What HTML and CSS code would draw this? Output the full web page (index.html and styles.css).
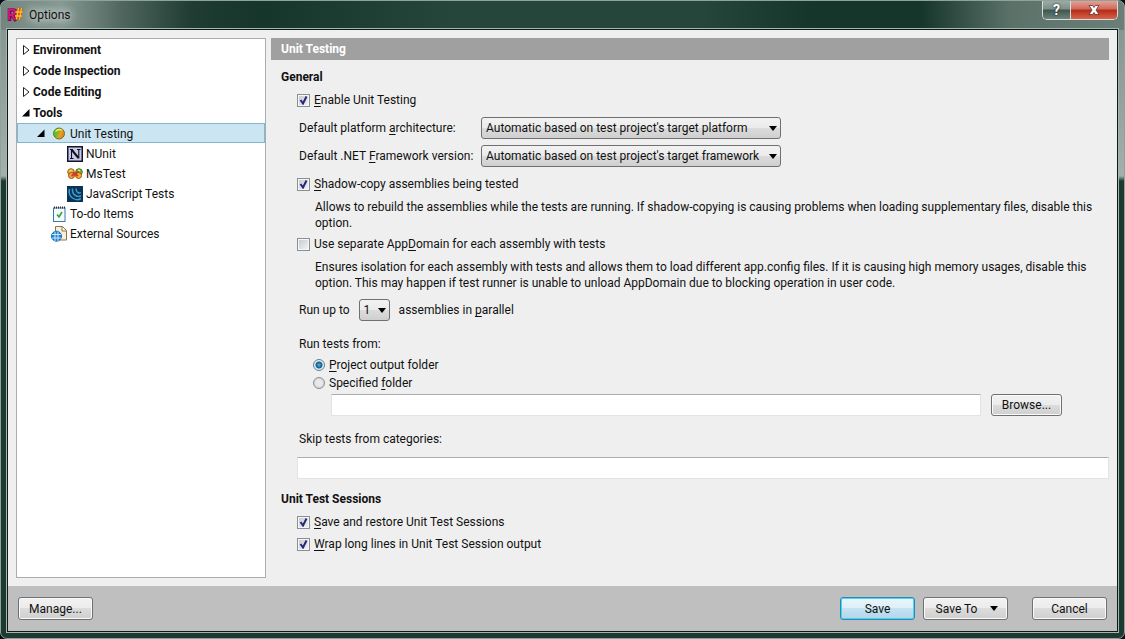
FILE: index.html
```html
<!DOCTYPE html>
<html lang="en">
<head>
    <meta charset="UTF-8">
    <meta name="viewport" content="width=device-width, initial-scale=1.0">
    <title>Options</title>
    <link rel="stylesheet" href="styles.css">
</head>
<body>
    <div class="window">
        <header class="titlebar">
            <svg class="app-icon" width="16" height="16" viewBox="0 0 16 16">
                <path d="M2.500 14V3h3.500q2.500 0 2.500 2.500T6 8.500H3M5.500 8.500L9 14" fill="none" stroke="#7d0a4c" stroke-width="3.600"/>
                <path d="M2 13V2.500h3.500q2.500 0 2.500 2.500T5.500 8H3M5 8l3 5" fill="none" stroke="#d0187f" stroke-width="1.800"/>
                <path d="M11.500 1L9.500 12.500M14.500 1L12.500 12.500M8.500 5h7M8 9h7" fill="none" stroke="#c8501a" stroke-width="2.600"/>
                <path d="M11.500 1L9.500 12.500M14.500 1L12.500 12.500M8.500 5h7M8 9h7" fill="none" stroke="#ffc02e" stroke-width="1.300"/>
            </svg>
            <h1 class="title">Options</h1>
            <div class="caption-buttons">
                <button class="caption help" type="button" aria-label="Help">?</button>
                <button class="caption close" type="button" aria-label="Close">
                    <svg width="12" height="10" viewBox="0 0 12 10">
                        <path d="M1 .5h3.500L6 2.500 7.500.5H11L8 5l3 4.500H7.500L6 7.500 4.500 9.500H1L4 5z" fill="#fff" stroke="#5a3030" stroke-width=".8"/>
                    </svg>
                </button>
            </div>
        </header>

        <div class="client">
            <div class="content">
                <nav class="tree">
                    <div class="group">
                        <svg width="8" height="10" viewBox="0 0 8 10"><path d="M1.500 .5v9L7 5z" fill="#fff" stroke="#222"/></svg>
                        <span>Environment</span>
                    </div>
                    <div class="group">
                        <svg width="8" height="10" viewBox="0 0 8 10"><path d="M1.500 .5v9L7 5z" fill="#fff" stroke="#222"/></svg>
                        <span>Code Inspection</span>
                    </div>
                    <div class="group">
                        <svg width="8" height="10" viewBox="0 0 8 10"><path d="M1.500 .5v9L7 5z" fill="#fff" stroke="#222"/></svg>
                        <span>Code Editing</span>
                    </div>
                    <div class="group">
                        <svg width="8" height="10" viewBox="0 0 8 10"><path d="M0 8.500h7.500V1z" fill="#000"/></svg>
                        <span>Tools</span>
                    </div>
                    <div class="item selected">
                        <svg width="8" height="10" viewBox="0 0 8 10"><path d="M0 8h7.500V.5z" fill="#000"/></svg>
                        <svg class="ball" width="14" height="14" viewBox="0 0 14 14">
                            <defs>
                                <linearGradient id="ball" x1="0" y1="0.300" x2="1" y2="0.700">
                                    <stop offset="0.300" stop-color="#5cc02c"/>
                                    <stop offset="0.600" stop-color="#e8a020"/>
                                    <stop offset="1" stop-color="#e07818"/>
                                </linearGradient>
                            </defs>
                            <circle cx="7" cy="6.500" r="5.500" fill="url(#ball)" stroke="#6c7a1c"/>
                            <path d="M3.500 4.500Q6 1.500 10 3" fill="none" stroke="#f4e878" stroke-width="1.300"/>
                        </svg>
                        <span>Unit Testing</span>
                    </div>
                    <div class="item leaf">
                        <svg width="16" height="16" viewBox="0 0 16 16">
                            <rect x=".75" y=".75" width="14.500" height="14.500" fill="#c9c9ee" stroke="#14142c" stroke-width="1.500"/>
                            <path d="M3 3.500h2.500M10 3.500h3.500M3 12.500h3.500M4.500 3.500v9M11.800 3.500v9" fill="none" stroke="#111" stroke-width="1.100"/>
                            <path d="M4.500 3.500l7 8.500" stroke="#111" stroke-width="2"/>
                        </svg>
                        <span>NUnit</span>
                    </div>
                    <div class="item leaf">
                        <svg width="16" height="16" viewBox="0 0 16 16">
                            <circle cx="4" cy="6" r="3.300" fill="#e8b030" stroke="#a06414"/>
                            <circle cx="12" cy="6" r="3.300" fill="#74b838" stroke="#3c7c1c"/>
                            <circle cx="4.500" cy="9.500" r="3" fill="#f0a040" stroke="#a4501c"/>
                            <circle cx="11.500" cy="9.500" r="3" fill="#f0b428" stroke="#a4501c"/>
                            <path d="M4.500 10l7-4.500M6 6.500l5 3.500" stroke="#c83c28" stroke-width="2"/>
                            <path d="M2.500 5l2-1M11 4l2 .5" stroke="#fff4a8"/>
                        </svg>
                        <span>MsTest</span>
                    </div>
                    <div class="item leaf">
                        <svg width="16" height="16" viewBox="0 0 16 16">
                            <rect width="16" height="16" fill="#0a3453"/>
                            <path d="M2.500 3Q1 9 5.500 12T14 12.500M5.500 2.500Q5 7.500 8.500 9.500T14 9.500M9 2.500Q9 5.500 10.800 6.500T14 6.500" fill="none" stroke="#3c9cd4" stroke-width="1.500"/>
                        </svg>
                        <span>JavaScript Tests</span>
                    </div>
                    <div class="item branch">
                        <svg width="16" height="16" viewBox="0 0 16 16">
                            <rect x="2.500" y="2" width="11.500" height="13.500" fill="#f4faff" stroke="#3c78b0"/>
                            <path d="M3 1.500h11" stroke="#333" stroke-width="2" stroke-dasharray="1 1"/>
                            <path d="M6 8.500l2 2.500 3-5" fill="none" stroke="#30a030" stroke-width="1.500"/>
                        </svg>
                        <span>To-do Items</span>
                    </div>
                    <div class="item branch">
                        <svg width="16" height="16" viewBox="0 0 16 16">
                            <path d="M4.500 .5h7l4 4v9.500h-11z" fill="#f8efdc" stroke="#8c7448"/>
                            <path d="M11 1v4h4" fill="#fff" stroke="#8c7448"/>
                            <circle cx="5.500" cy="10.200" r="5" fill="#2484d8" stroke="#1464b0"/>
                            <path d="M1 8.500h9M1 12h9M4 5.500v9.500M7 5.500v9.500" stroke="#d8f0ff" stroke-width=".9"/>
                        </svg>
                        <span>External Sources</span>
                    </div>
                </nav>

                <main class="page">
                    <h2 class="page-title">Unit Testing</h2>
                    <form class="settings">
                        <h3>General</h3>
                        <div class="section">
                            <label class="check"><input type="checkbox" checked><span><u>E</u>nable Unit Testing</span></label>
                            <div class="field">
                                <label class="field-label" for="platform">Default platform <u>a</u>rchitecture:</label>
                                <select class="combo" id="platform">
                                    <option>Automatic based on test project's target platform</option>
                                </select>
                            </div>
                            <div class="field">
                                <label class="field-label" for="framework">Default .NET <u>F</u>ramework version:</label>
                                <select class="combo" id="framework">
                                    <option>Automatic based on test project's target framework</option>
                                </select>
                            </div>
                            <label class="check"><input type="checkbox" checked><span><u>S</u>hadow-copy assemblies being tested</span></label>
                            <p>Allows to rebuild the assemblies while the tests are running. If shadow-copying is causing problems when loading supplementary files, disable this option.</p>
                            <label class="check"><input type="checkbox"><span>Use separate App<u>D</u>omain for each assembly with tests</span></label>
                            <p>Ensures isolation for each assembly with tests and allows them to load different app.config files. If it is causing high memory usages, disable this option. This may happen if test runner is unable to unload AppDomain due to blocking operation in user code.</p>
                            <div class="field parallel">
                                <label for="parallel">Run up to</label>
                                <select class="combo small" id="parallel">
                                    <option>1</option>
                                </select>
                                <label for="parallel">assemblies in <u>p</u>arallel</label>
                            </div>
                            <fieldset class="run-from">
                                <legend class="caption-text">Run tests from:</legend>
                                <label class="radio"><input type="radio" name="run" checked><span><u>P</u>roject output folder</span></label>
                                <label class="radio"><input type="radio" name="run"><span>Specified <u>f</u>older</span></label>
                                <div class="folder">
                                    <input class="text" type="text" aria-label="Specified folder">
                                    <button class="btn browse" type="button">Browse...</button>
                                </div>
                            </fieldset>
                            <label class="caption-text" for="skip">Skip tests from categories:</label>
                            <input class="text skip" id="skip" type="text">
                        </div>
                        <h3>Unit Test Sessions</h3>
                        <div class="section">
                            <label class="check"><input type="checkbox" checked><span><u>S</u>ave and restore Unit Test Sessions</span></label>
                            <label class="check"><input type="checkbox" checked><span><u>W</u>rap long lines in Unit Test Session output</span></label>
                        </div>
                    </form>
                </main>
            </div>

            <footer class="footer">
                <button class="btn" type="button">Manage...</button>
                <div class="actions">
                    <button class="btn primary" type="button">Save</button>
                    <button class="btn save-to" type="button">Save To
                        <svg width="8" height="5" viewBox="0 0 8 5"><path d="M0 0h8L4 5z"/></svg>
                    </button>
                    <button class="btn cancel" type="button">Cancel</button>
                </div>
            </footer>
        </div>
    </div>
</body>
</html>
```
FILE: styles.css
```css
* {
    box-sizing: border-box;
}

body {
    margin: 0;
    background: #070d16;
    color: #111;
    font-family: Roboto, "Open Sans", sans-serif;
    font-size: 12px;
    line-height: 16px;
}

h1, h2, h3, p {
    margin: 0;
    font-size: 12px;
}

button, select, input {
    margin: 0;
    font: inherit;
    color: inherit;
}

u {
    text-underline-offset: 2px;
}

/* Glass window frame */
.window {
    display: flex;
    flex-direction: column;
    min-height: 100vh;
    padding: 0 6px 6px;
    border: 1px solid #8fa39c;
    border-radius: 7px;
    background:
        linear-gradient(90deg, #74857f 0, #879993 60px, #50675f 120px, #203c33 190px, #16352b 260px, #27463b 450px, #27463b 700px, #16352b 810px, #16352b 920px, #5b7269 1010px, #6a7f78 100%) top / 100% 29px no-repeat,
        linear-gradient(180deg, #80918b 0, #a3b0ac 175px, #1c3a31 180px, #1c3a31 100%);
}

/* Title bar */
.titlebar {
    display: flex;
    align-items: center;
    height: 28px;
    gap: 6px;
}

.title {
    flex: 1;
    font-weight: normal;
    text-shadow: 0 0 8px #dfe8e4, 0 0 8px #dfe8e4;
}

.caption-buttons {
    display: flex;
    align-self: flex-start;
    height: 19px;
    border: 1px solid #d5dedb;
    border-top: 0;
    border-radius: 0 0 5px 5px;
    overflow: hidden;
}

.caption {
    display: flex;
    align-items: center;
    justify-content: center;
    padding: 0;
    border: 0;
    color: #fff;
}

.help {
    width: 28px;
    border-right: 1px solid #d5dedb;
    background: linear-gradient(#9caba6 0, #7c8e88 45%, #3f564f 50%, #6c827a 100%);
    font-size: 14px;
    font-weight: bold;
    text-shadow: 0 0 2px #000;
}

.close {
    width: 46px;
    background: linear-gradient(#e3a195 0, #cf6a5a 45%, #b52a16 50%, #d8634a 100%);
}

.client {
    display: flex;
    flex: 1;
    flex-direction: column;
    border: 1px solid #0c1a15;
    outline: 1px solid #a5b5af;
    background: #efefef;
}

.content {
    display: flex;
    flex: 1;
    gap: 5px;
    padding: 8px;
}

/* Category tree */
.tree {
    flex: 0 0 250px;
    border: 1px solid #a8adb0;
    background: #fff;
}

.group {
    display: flex;
    align-items: center;
    gap: 3px;
    height: 21px;
    padding-left: 5px;
    font-weight: bold;
}

.item {
    display: flex;
    align-items: center;
    gap: 3px;
    height: 20px;
    padding-top: 2px;
}

.branch {
    padding-left: 34px;
}

.leaf {
    padding-left: 50px;
}

.selected {
    gap: 4px;
    padding-left: 19px;
    border: 1px solid #85b6cb;
    background: #cbe6f2;
}

.ball {
    margin-left: 3px;
}

/* Settings page */
.page {
    flex: 1;
}

.page-title {
    padding: 3px 10px;
    background: #a0a0a0;
    color: #fff;
}

.settings {
    padding-top: 7px;
}

h3 {
    padding-left: 10px;
    line-height: 20px;
}

.section {
    display: flex;
    flex-direction: column;
    padding-left: 26px;
    margin: 3px 0 10px;
}

.check {
    display: flex;
    align-items: center;
    align-self: flex-start;
    gap: 4px;
    height: 20px;
    margin-bottom: 2px;
}

.check input {
    appearance: none;
    width: 13px;
    height: 13px;
    border: 1px solid #8a8f94;
    outline: 1px solid #f6f6f6;
    outline-offset: -2px;
    background: linear-gradient(135deg, #c4c9ce, #f5f5f5);
}

.check input:checked {
    background: url("data:image/svg+xml,%3Csvg xmlns='http://www.w3.org/2000/svg' viewBox='0 0 11 11'%3E%3Cpath d='M2.500 5l2.500 3.500L8.500 1.500' fill='none' stroke='%23282878' stroke-width='2'/%3E%3C/svg%3E") center, linear-gradient(135deg, #c4c9ce, #f5f5f5);
}

.field {
    display: flex;
    align-items: center;
    padding-left: 2px;
    margin-top: 5px;
}

.field + .field {
    margin-top: 6px;
}

.field + .check {
    margin-top: 7px;
}

.field-label {
    width: 182px;
    white-space: nowrap;
}

.combo {
    appearance: none;
    width: 300px;
    height: 22px;
    padding: 0 4px;
    border: 1px solid #707070;
    border-radius: 3px;
    background:
        url("data:image/svg+xml,%3Csvg xmlns='http://www.w3.org/2000/svg' viewBox='0 0 8 5'%3E%3Cpath d='M0 0h8L4 5z'/%3E%3C/svg%3E") right 3px center / 8px 5px no-repeat,
        linear-gradient(#f2f2f2 0, #ebebeb 50%, #dcdcdc 50%, #cfcfcf 100%);
}

.parallel {
    gap: 9px;
}

.small {
    width: 31px;
}

p {
    padding: 0 10px 0 18px;
    margin: 3px 0;
}

.run-from {
    min-width: 0;
    padding: 0;
    margin: 13px 0;
    border: 0;
}

.caption-text {
    padding: 0 2px;
    line-height: 20px;
}

legend {
    margin-bottom: 2px;
}

.radio {
    display: flex;
    align-items: center;
    gap: 4px;
    width: fit-content;
    height: 18px;
    margin-left: 16px;
}

.radio input {
    appearance: none;
    width: 12px;
    height: 12px;
    border: 1px solid #8a8f94;
    border-radius: 50%;
    background: radial-gradient(#e8e8e8 40%, #c4c8cc 100%);
}

.radio input:checked {
    border-color: #5d7f96;
    background: radial-gradient(#59b4dc 0, #135a86 3px, #e4eef4 4px);
}

.folder {
    display: flex;
    gap: 10px;
    padding: 2px 47px 0 34px;
}

.text {
    flex: 1;
    height: 22px;
    padding: 0 4px;
    border: 1px solid #e2e3e6;
    border-top-color: #abadb3;
    background: #fff;
}

.skip {
    flex: none;
    margin-top: 8px;
}

/* Buttons */
.btn {
    width: 75px;
    height: 23px;
    padding: 0;
    border: 1px solid #707070;
    border-radius: 3px;
    box-shadow: inset 0 0 0 1px #fafafa;
    background: linear-gradient(#f2f2f2 0, #ebebeb 50%, #dcdcdc 50%, #cfcfcf 100%);
}

.browse {
    width: 71px;
    height: 22px;
}

.primary {
    border-color: #2c8ab0;
    box-shadow: inset 0 0 0 1px #4fd0f4;
    background: linear-gradient(#eaf5fa 0, #dceff8 50%, #c4e3f2 50%, #b0d6ea 100%);
}

.save-to {
    display: flex;
    align-items: center;
    justify-content: center;
    gap: 13px;
    width: 85px;
    padding-left: 3px;
}

.footer {
    display: flex;
    align-items: center;
    justify-content: space-between;
    height: 45px;
    padding: 0 10px;
    background: #bfbfbf;
}

.actions {
    display: flex;
    gap: 8px;
}

.cancel {
    margin-left: 16px;
}
```
